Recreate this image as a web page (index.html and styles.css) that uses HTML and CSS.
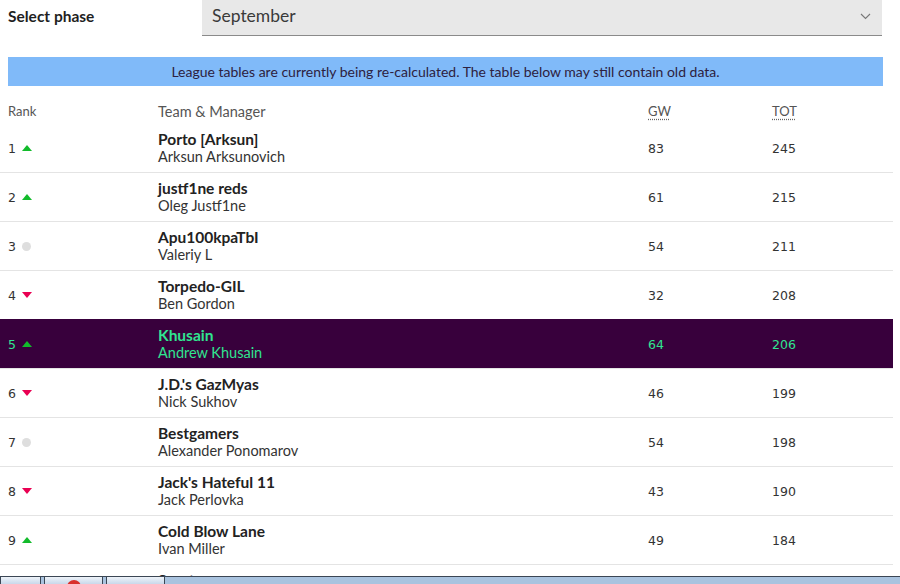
FILE: index.html
```html
<!DOCTYPE html>
<html>
<head>
<meta charset="utf-8">
<link rel="stylesheet" href="styles.css">
</head>
<body>
<div class="page">
  <div class="phase">
    <div class="phase-label">Select phase</div>
    <div class="select">
      <span>September</span>
      <svg class="chev" width="11" height="7" viewBox="0 0 11 7"><path d="M1 1 L5.5 5.5 L10 1" fill="none" stroke="#777" stroke-width="1.1"/></svg>
    </div>
  </div>
  <div class="banner">League tables are currently being re-calculated. The table below may still contain old data.</div>
  <div class="table">
    <div class="thead">
      <div class="c-rank">Rank</div>
      <div class="c-team">Team &amp; Manager</div>
      <div class="c-gw"><abbr>GW</abbr></div>
      <div class="c-tot"><abbr>TOT</abbr></div>
    </div>
    <div class="row">
      <div class="c-rank num">1 <i class="up"></i></div>
      <div class="c-team"><b>Porto [Arksun]</b><span>Arksun Arksunovich</span></div>
      <div class="c-gw num">83</div><div class="c-tot num">245</div>
    </div>
    <div class="row">
      <div class="c-rank num">2 <i class="up"></i></div>
      <div class="c-team"><b>justf1ne reds</b><span>Oleg Justf1ne</span></div>
      <div class="c-gw num">61</div><div class="c-tot num">215</div>
    </div>
    <div class="row">
      <div class="c-rank num">3 <i class="same"></i></div>
      <div class="c-team"><b>Apu100kpaTbI</b><span>Valeriy L</span></div>
      <div class="c-gw num">54</div><div class="c-tot num">211</div>
    </div>
    <div class="row">
      <div class="c-rank num">4 <i class="down"></i></div>
      <div class="c-team"><b>Torpedo-GIL</b><span>Ben Gordon</span></div>
      <div class="c-gw num">32</div><div class="c-tot num">208</div>
    </div>
    <div class="row mine">
      <div class="c-rank num">5 <i class="up"></i></div>
      <div class="c-team"><b>Khusain</b><span>Andrew Khusain</span></div>
      <div class="c-gw num">64</div><div class="c-tot num">206</div>
    </div>
    <div class="row">
      <div class="c-rank num">6 <i class="down"></i></div>
      <div class="c-team"><b>J.D.'s GazMyas</b><span>Nick Sukhov</span></div>
      <div class="c-gw num">46</div><div class="c-tot num">199</div>
    </div>
    <div class="row">
      <div class="c-rank num">7 <i class="same"></i></div>
      <div class="c-team"><b>Bestgamers</b><span>Alexander Ponomarov</span></div>
      <div class="c-gw num">54</div><div class="c-tot num">198</div>
    </div>
    <div class="row">
      <div class="c-rank num">8 <i class="down"></i></div>
      <div class="c-team"><b>Jack's Hateful 11</b><span>Jack Perlovka</span></div>
      <div class="c-gw num">43</div><div class="c-tot num">190</div>
    </div>
    <div class="row">
      <div class="c-rank num">9 <i class="up"></i></div>
      <div class="c-team"><b>Cold Blow Lane</b><span>Ivan Miller</span></div>
      <div class="c-gw num">49</div><div class="c-tot num">184</div>
    </div>
    <div class="row">
      <div class="c-rank num">10 <i class="down"></i></div>
      <div class="c-team"><b>Sparta</b><span>Igor S</span></div>
      <div class="c-gw num">40</div><div class="c-tot num">180</div>
    </div>
  </div>
</div>
<div class="taskbar">
  <div class="tb-btn w41"></div>
  <div class="tb-btn w59"><span class="dot"></span></div>
  <div class="tb-btn w59"></div>
</div>
</body>
</html>
```
FILE: styles.css
```css
html, body { margin: 0; padding: 0; background: #fff; }
body { font-family: "Lato", "Noto Sans", sans-serif; color: #222; overflow: hidden; }
.page { width: 893px; }
.phase { display: flex; align-items: flex-start; height: 37px; }
.phase-label { width: 194px; padding-left: 8px; font-size: 15.5px; font-weight: 700; line-height: 32px; color: #1f1f1f; }
.select { width: 680px; box-sizing: border-box; height: 36px; background: #e8e8e8; border-bottom: 1px solid #8a8a8a; display: flex; align-items: center; justify-content: space-between; padding: 0 11px 0 10px; font-size: 17.5px; color: #3a3a3a; }
.select span { position: relative; top: -2px; }
.chev { position: relative; top: -1px; }
.banner { margin: 20px 10px 0 8px; height: 29px; background: #80baf9; color: #2d2140; font-size: 14px; display: flex; align-items: center; justify-content: center; }
.table { margin-top: 12px; }
.thead, .row { display: flex; align-items: center; }
.thead { height: 26px; font-size: 13px; color: #555; }
.thead abbr { text-decoration: underline dotted #666; text-underline-offset: 3px; }
.row { height: 48px; border-top: 1px solid #e4e4e4; }
.thead + .row { border-top: none; }
.c-rank { width: 158px; padding-left: 8px; box-sizing: border-box; display: flex; align-items: center; }
.c-team { width: 490px; display: flex; flex-direction: column; font-size: 14.5px; line-height: 17px; }
.c-team b { font-weight: 700; font-size: 15.5px; color: #222; }
.c-team span { color: #333; }
.c-gw { width: 124px; }
.c-tot { width: 121px; }
.num { font-family: "DejaVu Sans", Verdana, sans-serif; font-size: 12.5px; color: #333; }
i { display: inline-block; margin-left: 6px; }
.up { width: 0; height: 0; border-left: 5px solid transparent; border-right: 5px solid transparent; border-bottom: 6px solid #12bb2b; }
.down { width: 0; height: 0; border-left: 5px solid transparent; border-right: 5px solid transparent; border-top: 6px solid #e90052; }
.same { width: 9px; height: 9px; border-radius: 50%; background: #dedede; }
.row.mine { background: #38003c; border-top-color: #38003c; }
.row.mine .c-team b, .row.mine .c-team span, .row.mine .num { color: #30e590; }
.taskbar { position: fixed; left: 0; right: 0; bottom: 0; height: 7px; border-top: 1px solid #3b4654; background: #a9c3df; display: flex; gap: 3px; }
.tb-btn { height: 8px; margin-top: -1px; border: 1px solid #3b4654; border-bottom: none; background: linear-gradient(#eef3f9, #c9d8ea); box-sizing: border-box; position: relative; overflow: hidden; }
.w41 { width: 41px; }
.w59 { width: 59px; }
.dot { position: absolute; left: 22px; top: 3px; width: 14px; height: 14px; border-radius: 50%; background: #d9302c; }
```
